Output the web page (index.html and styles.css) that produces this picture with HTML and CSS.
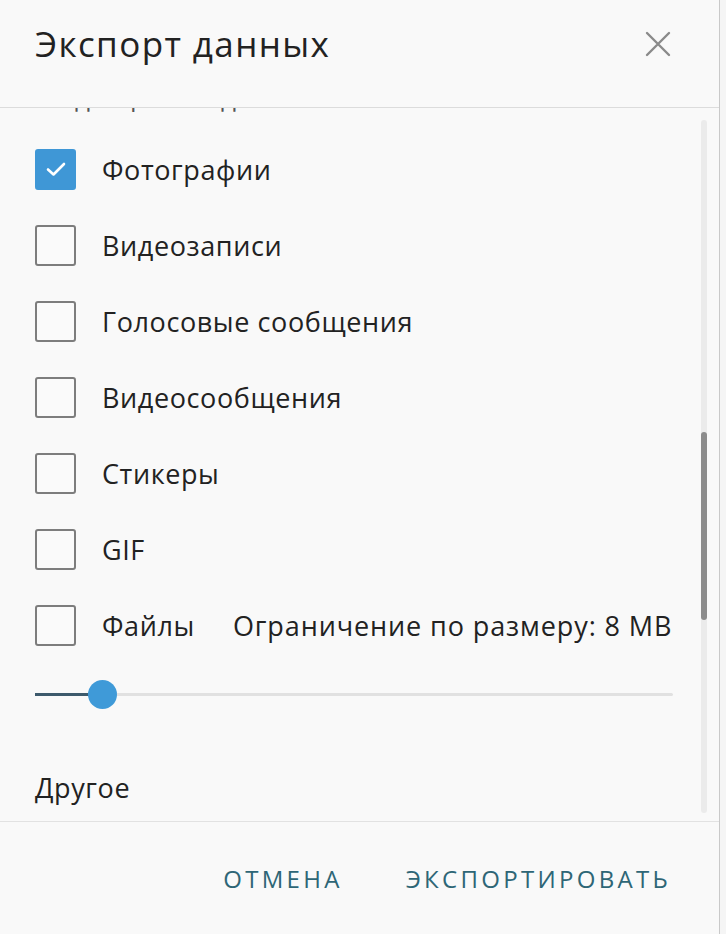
FILE: index.html
```html
<!DOCTYPE html>
<html lang="ru">
<head>
<meta charset="utf-8">
<title>Экспорт данных</title>
<link rel="stylesheet" href="styles.css">
</head>
<body>
<div class="dialog">
  <header class="head">
    <h1 class="title">Экспорт данных</h1>
    <button class="close" aria-label="Закрыть">
      <svg width="26" height="26" viewBox="0 0 26 26"><path d="M2 2 L24 24 M24 2 L2 24" stroke="#8a8a8a" stroke-width="2.4" fill="none" stroke-linecap="round"/></svg>
    </button>
  </header>
  <div class="body">
    <div class="list">
      <div class="ghost"><span>Медиафайлы для скачивания</span></div>
      <label class="row"><span class="box checked"><svg width="22" height="18" viewBox="0 0 22 18"><path d="M3 9.5 L8.5 14.5 L19 4" stroke="#fff" stroke-width="2.6" fill="none" stroke-linecap="round" stroke-linejoin="round"/></svg></span><span class="lbl">Фотографии</span></label>
      <label class="row"><span class="box"></span><span class="lbl">Видеозаписи</span></label>
      <label class="row"><span class="box"></span><span class="lbl">Голосовые сообщения</span></label>
      <label class="row"><span class="box"></span><span class="lbl">Видеосообщения</span></label>
      <label class="row"><span class="box"></span><span class="lbl">Стикеры</span></label>
      <label class="row"><span class="box"></span><span class="lbl">GIF</span></label>
      <label class="row"><span class="box"></span><span class="lbl">Файлы</span><span class="limit">Ограничение по размеру: 8 MB</span></label>
      <div class="slider">
        <div class="track"><div class="fill"></div><div class="knob"></div></div>
      </div>
      <div class="section">Другое</div>
    </div>
    <div class="scrollbar"><div class="thumb"></div></div>
  </div>
  <footer class="foot">
    <button class="btn">Отмена</button>
    <button class="btn">Экспортировать</button>
  </footer>
</div>
</body>
</html>
```
FILE: styles.css
```css
html, body {
  margin: 0;
  padding: 0;
  background: #f5f5f5;
}
body {
  font-family: "Open Sans", "DejaVu Sans", sans-serif;
  color: #222;
}
.dialog {
  width: 719px;
  height: 934px;
  background: #f9f9f9;
  border-right: 1px solid #c9c9c9;
  display: flex;
  flex-direction: column;
  overflow: hidden;
}
.head {
  height: 108px;
  border-bottom: 1px solid #dcdcdc;
  display: flex;
  align-items: center;
  justify-content: space-between;
  padding: 0 48px 0 35px;
  box-sizing: border-box;
  flex: none;
}
.title {
  margin: 0 0 20px 0;
  font-size: 35px;
  font-weight: 400;
  color: #222;
  letter-spacing: 1.4px;
}
.close {
  border: 0;
  background: none;
  padding: 0;
  margin-bottom: 20px;
  display: flex;
}
.body {
  height: 713px;
  flex: none;
  display: flex;
  overflow: hidden;
  border-bottom: 1px solid #e2e2e2;
}
.list {
  flex: 1;
  padding-left: 35px;
  padding-right: 8px;
  overflow: hidden;
  white-space: nowrap;
}
.ghost {
  height: 4px;
  overflow: hidden;
  margin-bottom: 19px;
}
.ghost span {
  display: block;
  margin-top: -27px;
  font-size: 26px;
  line-height: 32px;
  color: #555;
  letter-spacing: 1px;
}
.row {
  height: 76px;
  display: flex;
  align-items: center;
}
.box {
  width: 41px;
  height: 41px;
  box-sizing: border-box;
  border: 2px solid #7d7d7d;
  border-radius: 3px;
  flex: none;
  display: flex;
  align-items: center;
  justify-content: center;
  background: #fafafa;
}
.box.checked {
  background: #3f97d6;
  border-color: #3f97d6;
}
.lbl {
  margin-left: 26px;
  font-size: 27px;
  letter-spacing: 0.6px;
  color: #222;
}
.limit {
  margin-left: 38px;
  font-size: 27px;
  letter-spacing: 0.9px;
  color: #222;
}
.slider {
  height: 62px;
  display: flex;
  align-items: center;
}
.track {
  position: relative;
  width: 638px;
  height: 3px;
  background: #e1e1e1;
  border-radius: 2px;
}
.fill {
  width: 67px;
  height: 3px;
  background: #3d5a6c;
}
.knob {
  position: absolute;
  left: 53px;
  top: -13px;
  width: 29px;
  height: 29px;
  border-radius: 50%;
  background: #3f9ad8;
}
.section {
  margin-top: 43px;
  font-size: 27px;
  letter-spacing: 0.6px;
  line-height: 40px;
  color: #222;
}
.scrollbar {
  width: 6px;
  margin: 12px 12px 8px 0;
  background: #ebebeb;
  border-radius: 3px;
  position: relative;
  flex: none;
}
.thumb {
  position: absolute;
  left: 0;
  right: 0;
  top: 312px;
  height: 188px;
  background: #8c8c8c;
  border-radius: 3px;
}
.foot {
  flex: 1;
  display: flex;
  justify-content: flex-end;
  align-items: center;
  padding: 0 38px 0 0;
  gap: 43px;
}
.btn {
  border: 0;
  background: none;
  font-family: "Open Sans", "DejaVu Sans", sans-serif;
  font-size: 24px;
  text-transform: uppercase;
  color: #2e6676;
  padding: 0 10px;
  letter-spacing: 3.3px;
}
```
